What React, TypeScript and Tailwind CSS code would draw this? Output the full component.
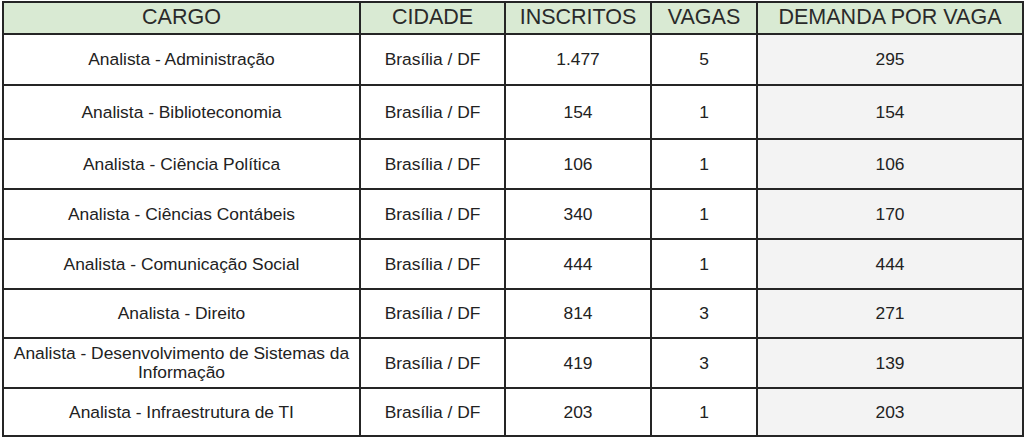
const rows = [
  ['Analista - Administração', 'Brasília / DF', '1.477', '5', '295', 'h-[51px]'],
  ['Analista - Biblioteconomia', 'Brasília / DF', '154', '1', '154', 'h-[54px]'],
  ['Analista - Ciência Política', 'Brasília / DF', '106', '1', '106', 'h-[50px]'],
  ['Analista - Ciências Contábeis', 'Brasília / DF', '340', '1', '170', 'h-[50px]'],
  ['Analista - Comunicação Social', 'Brasília / DF', '444', '1', '444', 'h-[50px]'],
  ['Analista - Direito', 'Brasília / DF', '814', '3', '271', 'h-[49px]'],
  ['Analista - Desenvolvimento de Sistemas da Informação', 'Brasília / DF', '419', '3', '139', 'h-[50px]'],
  ['Analista - Infraestrutura de TI', 'Brasília / DF', '203', '1', '203', 'h-[48px]'],
];

const th = 'border-2 border-[#252525] bg-[#d9ead3] font-normal text-[21.5px] leading-none text-[#2a2a2a] h-[32px] text-center';
const td = 'border-2 border-[#252525] text-[17.4px] leading-[19px] text-[#222] text-center px-1';

export default function App() {
  return (
    <div className="w-[1024px] h-[438px] bg-white pl-[2px] pt-[1px]" style={{ fontFamily: '"Liberation Sans", Arial, sans-serif' }}>
      <table className="table-fixed border-collapse w-[1020px]">
        <colgroup>
          <col className="w-[357px]" />
          <col className="w-[145px]" />
          <col className="w-[146px]" />
          <col className="w-[106px]" />
          <col className="w-[266px]" />
        </colgroup>
        <thead>
          <tr>
            <th className={th}>CARGO</th>
            <th className={th}>CIDADE</th>
            <th className={th}>INSCRITOS</th>
            <th className={th}>VAGAS</th>
            <th className={th}>DEMANDA POR VAGA</th>
          </tr>
        </thead>
        <tbody>
          {rows.map((r) => (
            <tr key={r[0]} className={r[5]}>
              <td className={td}>{r[0]}</td>
              <td className={td}>{r[1]}</td>
              <td className={td}>{r[2]}</td>
              <td className={td}>{r[3]}</td>
              <td className={td + ' bg-[#f3f3f3]'}>{r[4]}</td>
            </tr>
          ))}
        </tbody>
      </table>
    </div>
  );
}
